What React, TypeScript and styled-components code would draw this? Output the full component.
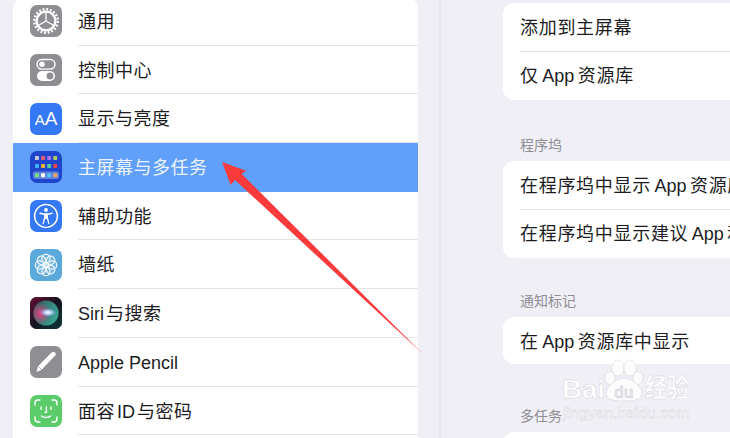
import React from 'react';
import styled, {createGlobalStyle} from 'styled-components';

const GlobalStyle = createGlobalStyle`
  html, body {
    margin: 0;
    padding: 0;
    background: #f0eff5;
  }
  * {
    box-sizing: border-box;
  }
`;

const fontStack = `'Inter', 'Noto Sans CJK SC', sans-serif`;

const Screen = styled.div`
  position: relative;
  display: grid;
  grid-template-columns: 439px 2px 289px;
  width: 730px;
  height: 438px;
  overflow: hidden;
  background: #f0eff5;
  font-family: ${fontStack};
  color: #1c1c1e;
`;

const Sidebar = styled.aside`
  padding: 0 21px 0 13px;
  margin-top: -3px;
`;

const Panel = styled.nav`
  min-height: 480px;
  background: #fff;
  border-radius: 12px;
  overflow: hidden;
`;

const MenuRow = styled.div<{$selected?: boolean}>`
  display: flex;
  align-items: center;
  gap: 16px;
  height: 48.7px;
  padding-left: 17px;
  background: ${p => p.$selected ? '#60a0fa' : 'transparent'};
`;

const IconTile = styled.div<{$color: string}>`
  display: flex;
  align-items: center;
  justify-content: center;
  flex: none;
  width: 32px;
  height: 32px;
  border-radius: 7px;
  overflow: hidden;
  background: ${p => p.$color};
`;

const AaText = styled.span`
  font-family: 'Liberation Sans', sans-serif;
  font-size: 19px;
  line-height: 1;
  color: #fff;
  small {
    font-size: 15px;
  }
`;

const Latin = styled.span<{$lead?: boolean}>`
  margin: 0 2px 0 ${p => p.$lead ? 0 : 2}px;
  font-family: 'Liberation Sans', sans-serif;
  letter-spacing: 0;
`;

const MenuLabel = styled.div<{$selected?: boolean}>`
  flex: 1;
  align-self: stretch;
  font-size: 18px;
  line-height: 49.7px;
  letter-spacing: .5px;
  white-space: nowrap;
  overflow: hidden;
  color: ${p => p.$selected ? 'rgba(255,255,255,.9)' : '#1c1c1e'};
  border-bottom: 1px solid ${p => p.$selected ? 'transparent' : '#e2e2e5'};
`;

const Split = styled.div`
  background: #e6e6eb;
`;

const Detail = styled.section`
  padding: 3px 0 0 62px;
  min-width: 0;
`;

const Card = styled.div`
  width: 300px;
  background: #fff;
  border-radius: 11px;
  overflow: hidden;
`;

const OptionRow = styled.div<{$single?: boolean}>`
  height: ${p => p.$single ? '47px' : '48.25px'};
  margin-left: 17px;
  font-size: 18px;
  line-height: 49px;
  letter-spacing: .7px;
  white-space: nowrap;
  overflow: hidden;
  & + & {
    border-top: 1px solid #e2e2e5;
    line-height: 47.5px;
  }
  ${Latin} {
    margin: 0 3.5px;
  }
`;

const SectionTitle = styled.div<{$top: number}>`
  height: 20px;
  margin: ${p => p.$top}px 0 6px;
  padding-left: 17px;
  font-size: 14px;
  line-height: 20px;
  color: #8e8e93;
`;

const Arrow = styled.svg`
  position: absolute;
  inset: 0;
  width: 730px;
  height: 438px;
`;

const Watermark = styled.svg`
  position: absolute;
  left: 560px;
  top: 353px;
  width: 140px;
  height: 72px;
`;

const WatermarkBrand = styled.text`
  font-size: 26px;
  font-weight: 700;
`;

const WatermarkDu = styled.text`
  font-size: 16px;
  font-weight: 700;
  fill: #e4e4ea;
`;

const WatermarkUrl = styled.text`
  font-size: 14px;
`;


const GearIcon = () => <svg width="32" height="32" viewBox="0 0 32 32">
    <circle cx="16" cy="16" r="9.4" fill="none" stroke="#fff" strokeWidth="2.4"/>
    <circle cx="16" cy="16" r="11.8" fill="none" stroke="#fff" strokeWidth="2.4" strokeDasharray="1.9 1.8"/>
    <path d="M16 16V8M16 16l7 4M16 16l-7 4" stroke="#fff" strokeWidth="1.3"/>
</svg>;

const ToggleIcon = () => <svg width="32" height="32" viewBox="0 0 32 32">
    <rect x="7" y="5.5" width="18" height="9.6" rx="4.8" fill="none" stroke="#fff" strokeWidth="1.4"/>
    <circle cx="12" cy="10.3" r="2.7" fill="#fff"/>
    <rect x="7" y="17" width="18" height="10" rx="5" fill="#fff"/>
    <circle cx="20" cy="22" r="3.4" fill="#8e8e93"/>
</svg>;

const HomeIcon = () => {
    const top = ['#c9ccd8', '#e0616e', '#a274ee', '#b3cb62'];
    const middle = ['#3fb4f2', '#efb337', '#52cfa2', '#ea4347'];
    const dock = ['#79e07c', '#ffffff', '#54c4f7', '#f0a35a'];
    return <svg width="32" height="32" viewBox="0 0 32 32">
        {top.map((color, i) => <rect key={color} x={5 + i * 6.1} y="5" width="3.9" height="3.9" rx=".7" fill={color}/>)}
        {middle.map((color, i) => <rect key={color} x={5 + i * 6.1} y="13" width="3.9" height="3.9" rx=".7" fill={color}/>)}
        <rect x="3" y="20.5" width="26" height="7.5" rx="2" fill="#5f83dd"/>
        {dock.map((color, i) => <rect key={color} x={5 + i * 6.1} y="22.3" width="3.9" height="3.9" rx=".7" fill={color}/>)}
    </svg>;
};

const AccessIcon = () => <svg width="32" height="32" viewBox="0 0 32 32">
    <circle cx="16" cy="16" r="11.4" fill="none" stroke="#fff" strokeWidth="1.5"/>
    <circle cx="16" cy="10" r="1.9" fill="#fff"/>
    <path d="M10 13.2C12 13.9 14 14.2 16 14.2S20 13.9 22 13.2" fill="none" stroke="#fff" strokeWidth="1.5" strokeLinecap="round"/>
    <path d="M14.6 14.2V18L13.2 23.6M17.4 14.2V18L18.8 23.6M14.6 14.2H17.4V18.4H14.6Z" fill="#fff" stroke="#fff" strokeWidth="1.2" strokeLinecap="round" strokeLinejoin="round"/>
</svg>;

const FlowerIcon = () => <svg width="32" height="32" viewBox="0 0 32 32">
    {[0, 45, 90, 135, 180, 225, 270, 315].map(angle =>
        <circle key={angle} cx="16" cy="9.4" r="4.2" fill="rgba(255,255,255,.12)" stroke="#fff" strokeWidth="1.1" transform={`rotate(${angle} 16 16)`}/>
    )}
    <circle cx="16" cy="16" r="2.2" fill="#fff" opacity=".7"/>
</svg>;

const SiriIcon = () => <svg width="32" height="32" viewBox="0 0 32 32">
    <defs>
        <linearGradient id="siriBg" x1="0" y1="0" x2="1" y2="1">
            <stop offset="0" stopColor="#6a0f38"/>
            <stop offset=".5" stopColor="#141420"/>
            <stop offset="1" stopColor="#0c3a3a"/>
        </linearGradient>
        <radialGradient id="siriPink" cx=".28" cy=".52" r=".42">
            <stop offset="0" stopColor="#e8407f"/>
            <stop offset="1" stopColor="#e8407f" stopOpacity="0"/>
        </radialGradient>
        <linearGradient id="siriTeal" x1="0" y1="0" x2="1" y2=".4">
            <stop offset="0" stopColor="#3a4f58"/>
            <stop offset="1" stopColor="#37a08e"/>
        </linearGradient>
        <radialGradient id="siriCore">
            <stop offset="0" stopColor="#fff"/>
            <stop offset=".45" stopColor="#bcdcff" stopOpacity=".8"/>
            <stop offset="1" stopColor="#6a7cf0" stopOpacity="0"/>
        </radialGradient>
    </defs>
    <rect width="32" height="32" fill="url(#siriBg)"/>
    <circle cx="16" cy="16" r="12.6" fill="url(#siriTeal)"/>
    <circle cx="16" cy="16" r="12.6" fill="url(#siriPink)"/>
    <ellipse cx="18" cy="15.5" rx="9" ry="4.6" fill="url(#siriCore)"/>
</svg>;

const PencilIcon = () => <svg width="32" height="32" viewBox="0 0 32 32">
    <path d="M6.5 26 7.8 20.6 21.6 6.4C22.6 5.4 24 5.4 25 6.4 26 7.4 26 8.8 25 9.8L11.3 24Z" fill="#fff"/>
    <path d="M8.4 20.4 11.6 23.6" stroke="#8e8e93" strokeWidth=".7"/>
</svg>;

const FaceIcon = () => <svg width="32" height="32" viewBox="0 0 32 32" fill="none" stroke="#fff" strokeWidth="1.4" strokeLinecap="round">
    <path d="M5 10V8A3 3 0 0 1 8 5H10M22 5H24A3 3 0 0 1 27 8V10M27 22V24A3 3 0 0 1 24 27H22M10 27H8A3 3 0 0 1 5 24V22"/>
    <path d="M11 12V14.2M21 12V14.2M16.4 12V17.4H15M11.4 21C13.8 23 18.2 23 20.6 21"/>
</svg>;

const menu = [
    {id: 'general', label: <>通用</>, color: '#8e8e93', icon: <GearIcon/>},
    {id: 'control', label: <>控制中心</>, color: '#8e8e93', icon: <ToggleIcon/>},
    {id: 'display', label: <>显示与亮度</>, color: '#3478f6', icon: <AaText><small>A</small>A</AaText>},
    {id: 'home', label: <>主屏幕与多任务</>, color: '#1f45cc', icon: <HomeIcon/>, selected: true},
    {id: 'access', label: <>辅助功能</>, color: '#3478f6', icon: <AccessIcon/>},
    {id: 'wallpaper', label: <>墙纸</>, color: '#5aa9da', icon: <FlowerIcon/>},
    {id: 'siri', label: <><Latin $lead>Siri</Latin>与搜索</>, color: '#141420', icon: <SiriIcon/>},
    {id: 'pencil', label: <Latin $lead>Apple Pencil</Latin>, color: '#8e8e93', icon: <PencilIcon/>},
    {id: 'face', label: <>面容<Latin>ID</Latin>与密码</>, color: '#5ccb6a', icon: <FaceIcon/>},
];

const App = () => {
    return <Screen>
        <GlobalStyle/>

        <Sidebar>
            <Panel>
                {menu.map(item =>
                    <MenuRow key={item.id} $selected={item.selected}>
                        <IconTile $color={item.color}>{item.icon}</IconTile>
                        <MenuLabel $selected={item.selected}>{item.label}</MenuLabel>
                    </MenuRow>
                )}
            </Panel>
        </Sidebar>

        <Split/>

        <Detail>
            <Card>
                <OptionRow>添加到主屏幕</OptionRow>
                <OptionRow>仅<Latin>App</Latin>资源库</OptionRow>
            </Card>

            <SectionTitle $top={35.5}>程序坞</SectionTitle>
            <Card>
                <OptionRow>在程序坞中显示<Latin>App</Latin>资源库</OptionRow>
                <OptionRow>在程序坞中显示建议<Latin>App</Latin>和最近使用的<Latin>App</Latin></OptionRow>
            </Card>

            <SectionTitle $top={33.5}>通知标记</SectionTitle>
            <Card>
                <OptionRow $single>在<Latin>App</Latin>资源库中显示</OptionRow>
            </Card>

            <SectionTitle $top={42}>多任务</SectionTitle>
            <Card>
                <OptionRow/>
            </Card>
        </Detail>

        <Arrow viewBox="0 0 730 438">
            <path d="M222 162 246 170.7 241.7 174 423.5 354.5 235 180 230.7 185Z" fill="#fb3a3c"/>
        </Arrow>

        <Watermark viewBox="0 0 140 72">
            <g fill="#fff" opacity=".82" stroke="#c9c9cf" strokeWidth=".5">
                <ellipse cx="58" cy="15" rx="6.2" ry="8"/>
                <ellipse cx="70" cy="15" rx="6.2" ry="8"/>
                <ellipse cx="50" cy="25" rx="5" ry="6.4"/>
                <ellipse cx="78" cy="25" rx="5" ry="6.4"/>
                <path d="M64 25C72 25 82 34 82 40 82 46 76 48 64 48 52 48 46 46 46 40 46 34 56 25 64 25Z"/>
            </g>
            <g fontFamily="'Liberation Sans', 'Noto Sans CJK SC', sans-serif" fill="#fff" stroke="#d0d0d6" strokeWidth=".4">
                <WatermarkBrand x="2" y="45" textLength="43" lengthAdjust="spacingAndGlyphs">Bai</WatermarkBrand>
                <WatermarkDu x="54" y="45">du</WatermarkDu>
                <WatermarkBrand x="85" y="44" textLength="44" lengthAdjust="spacingAndGlyphs">经验</WatermarkBrand>
                <WatermarkUrl x="3" y="65" textLength="127" lengthAdjust="spacingAndGlyphs">jingyan.baidu.com</WatermarkUrl>
            </g>
        </Watermark>
    </Screen>;
};

export default App;
